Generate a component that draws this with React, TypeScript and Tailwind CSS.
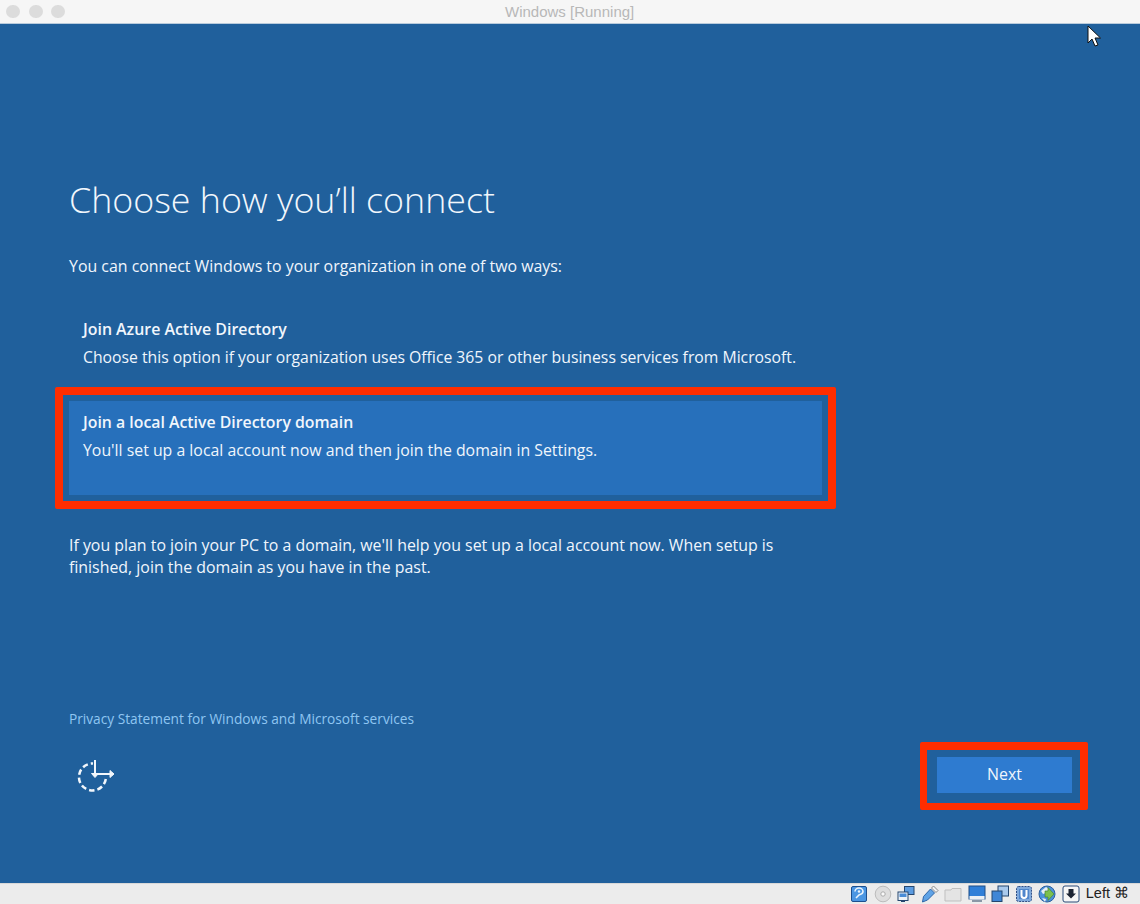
import type { ReactNode } from 'react';

const winFont = { fontFamily: '"Open Sans", "Noto Sans", sans-serif' };

function SetupIcon() {
  return (
    <svg width="40" height="40" viewBox="0 0 40 40" fill="none" stroke="#f2f7fc">
      <path d="M29.800 24A13.500 13.500 0 1 1 17 8.500" strokeWidth="2.500" strokeDasharray="5.500 3" />
      <path d="M19 5v16" strokeWidth="2" />
      <path d="M15.500 18.500h7L19 22.500z" fill="#f2f7fc" strokeWidth="1" />
      <path d="M20 19h15" strokeWidth="2" />
      <path d="M34 15.500v7l4-3.500z" fill="#f2f7fc" strokeWidth="1" />
    </svg>
  );
}

function Cursor() {
  return (
    <svg className="absolute right-[38px] top-[1px]" width="16" height="24" viewBox="0 0 16 24">
      <path d="M2 1v17l4-4 3 7 3-1-3-7h5.500z" fill="#fff" stroke="#111" strokeWidth="1" />
    </svg>
  );
}

function StatusIcon({ children }: { children: ReactNode }) {
  return (
    <svg width="18" height="18" viewBox="0 0 18 18" className="shrink-0">
      {children}
    </svg>
  );
}

function StatusIcons() {
  return (
    <div className="flex items-center gap-[5.500px]">
      {/* hard disk */}
      <StatusIcon>
        <rect x="1.500" y="1.500" width="15" height="15" rx="1.500" fill="#4b96e2" stroke="#1c4f8f" />
        <path d="M5 6.500a4 3.500 0 0 1 8 0c0 2.500-2.500 3-4 3.500l-3 3" fill="none" stroke="#eaf3fc" strokeWidth="1.600" />
        <circle cx="9" cy="6.500" r="1.200" fill="#eaf3fc" />
      </StatusIcon>
      {/* optical disc */}
      <StatusIcon>
        <circle cx="9" cy="9" r="7.800" fill="#dedede" stroke="#bcbcbc" />
        <circle cx="9" cy="9" r="2.200" fill="#fafafa" stroke="#ababab" />
      </StatusIcon>
      {/* network */}
      <StatusIcon>
        <rect x="7.500" y="1.500" width="9.500" height="8" fill="#5b9be0" stroke="#24466f" />
        <rect x="1" y="7" width="10" height="8.500" fill="#eef3f8" stroke="#24466f" />
        <rect x="2.500" y="8.500" width="7" height="3.500" fill="#4a8cd6" />
        <path d="M4 16.500h4" stroke="#24466f" />
      </StatusIcon>
      {/* usb */}
      <StatusIcon>
        <path d="M1.500 17l1-5.500 7-7.500 4 4-7 7z" fill="#5fa3e6" stroke="#2c64a8" />
        <path d="M10.500 3l2-2 4.500 4.500-2 2z" fill="#f2f4f6" stroke="#8a8a8a" />
      </StatusIcon>
      {/* shared folder */}
      <StatusIcon>
        <path d="M1 5h6l1-1.500h9V16H1z" fill="#e4e4e4" stroke="#bfbfbf" />
      </StatusIcon>
      {/* display */}
      <StatusIcon>
        <rect x="1" y="1" width="16" height="13" fill="#2f7fd8" stroke="#1f4f88" />
        <rect x="1.500" y="11" width="15" height="3.500" fill="#eaeff4" />
        <rect x="4" y="15" width="10" height="2" fill="#8a97a6" />
      </StatusIcon>
      {/* video capture */}
      <StatusIcon>
        <rect x="7" y="1" width="10.500" height="10" fill="#a9c9ec" stroke="#24466f" />
        <rect x="1" y="6" width="10" height="10.500" fill="#3f86d6" stroke="#24466f" />
      </StatusIcon>
      {/* chip */}
      <StatusIcon>
        <rect x="1.500" y="1.500" width="15" height="15" rx="2" fill="#7fa9dc" stroke="#2f4f88" strokeDasharray="2 1" />
        <rect x="4" y="4" width="10" height="10" fill="#4f86cc" />
        <path d="M6.500 5v5.500a2.500 2.500 0 0 0 5 0V5" fill="none" stroke="#fff" strokeWidth="2" />
      </StatusIcon>
      {/* globe */}
      <StatusIcon>
        <circle cx="9" cy="9" r="8" fill="#4d93dc" stroke="#2c5f9e" />
        <path d="M3 6l5-4 3 2-3 4-3 1zM4 13l4 1-1 3z" fill="#e6eef6" />
        <path d="M7 6h3V2.500l6 6.500-6 6.500V12H7z" fill="#7cc04e" stroke="#3c7a2c" strokeWidth=".6" />
      </StatusIcon>
      {/* mouse integration */}
      <StatusIcon>
        <rect x="1" y="1" width="16" height="16" rx="2" fill="#f6f6f6" stroke="#2a4a78" />
        <path d="M6.500 4h5v4.500H14L9 13.500 4 8.500h2.500z" fill="#1c2433" />
      </StatusIcon>
    </div>
  );
}

export default function App() {
  return (
    <div className="flex h-[904px] w-[1140px] flex-col overflow-hidden bg-[#20609c]" style={winFont}>
      <header className="relative flex h-[24px] shrink-0 items-center border-b border-[#b9cbdc] bg-[#f6f6f6] pl-[6px]">
        <div className="flex gap-[8.500px]">
          <span className="h-[13px] w-[14px] rounded-full bg-[#dcdcdc]" />
          <span className="h-[13px] w-[14px] rounded-full bg-[#dcdcdc]" />
          <span className="h-[13px] w-[14px] rounded-full bg-[#dcdcdc]" />
        </div>
        <span className="absolute left-[505px] top-[2px] text-[15px] leading-[19px] text-[#b8b8b8]" style={{ fontFamily: '"Liberation Sans", sans-serif' }}>
          Windows [Running]
        </span>
      </header>

      <main className="relative flex flex-1 flex-col pl-[69px] pr-[52px] pt-[151px] text-[#f0f6fc]">
        <Cursor />
        <h1 className="h-[48px] text-[35.750px] font-light leading-[48px] text-[#f2f7fc]">Choose how you’ll connect</h1>
        <p className="mt-[31px] text-[15.900px] leading-[24px]">You can connect Windows to your organization in one of two ways:</p>

        <div className="mt-[37px] pl-[14px] leading-[28px]">
          <p className="text-[15.900px] font-semibold">Join Azure Active Directory</p>
          <p className="text-[15.750px]">Choose this option if your organization uses Office 365 or other business services from Microsoft.</p>
        </div>

        <div className="ml-[-14px] mt-[16px] w-[781px] rounded-[2px] border-[8px] border-[#ff2d00] p-[6px]">
          <div className="h-[94px] bg-[#2770bb] px-[14px] pt-[7px] text-[15.850px] leading-[28px]">
            <p className="font-semibold">Join a local Active Directory domain</p>
            <p>You'll set up a local account now and then join the domain in Settings.</p>
          </div>
        </div>

        <p className="mt-[25px] text-[15.900px] leading-[22px]">
          If you plan to join your PC to a domain, we'll help you set up a local account now. When setup is
          <br />
          finished, join the domain as you have in the past.
        </p>

        <footer className="mt-auto flex items-end justify-between pb-[73px]">
          <div className="flex flex-col">
            <span className="text-[13.700px] leading-[20px] text-[#8fc6f2]">Privacy Statement for Windows and Microsoft services</span>
            <div className="mb-[15px] ml-[7px] mt-[26px]">
              <SetupIcon />
            </div>
          </div>
          <div className="rounded-[2px] border-[7px] border-r-[8px] border-t-[8px] border-[#ff2d00] pb-[10px] pl-[10px] pr-[8px] pt-[7px]">
            <button className="block h-[36px] w-[135px] bg-[#2e7bd0] text-[15.900px] text-[#f0f6fc]">Next</button>
          </div>
        </footer>
      </main>

      <footer className="flex h-[21px] shrink-0 items-center justify-end border-t border-[#d8d8d8] bg-[#ececec] pr-[11px]">
        <StatusIcons />
        <span className="ml-[6px] text-[14.500px] text-[#222]" style={{ fontFamily: '"Liberation Sans", sans-serif' }}>
          Left ⌘
        </span>
      </footer>
    </div>
  );
}
